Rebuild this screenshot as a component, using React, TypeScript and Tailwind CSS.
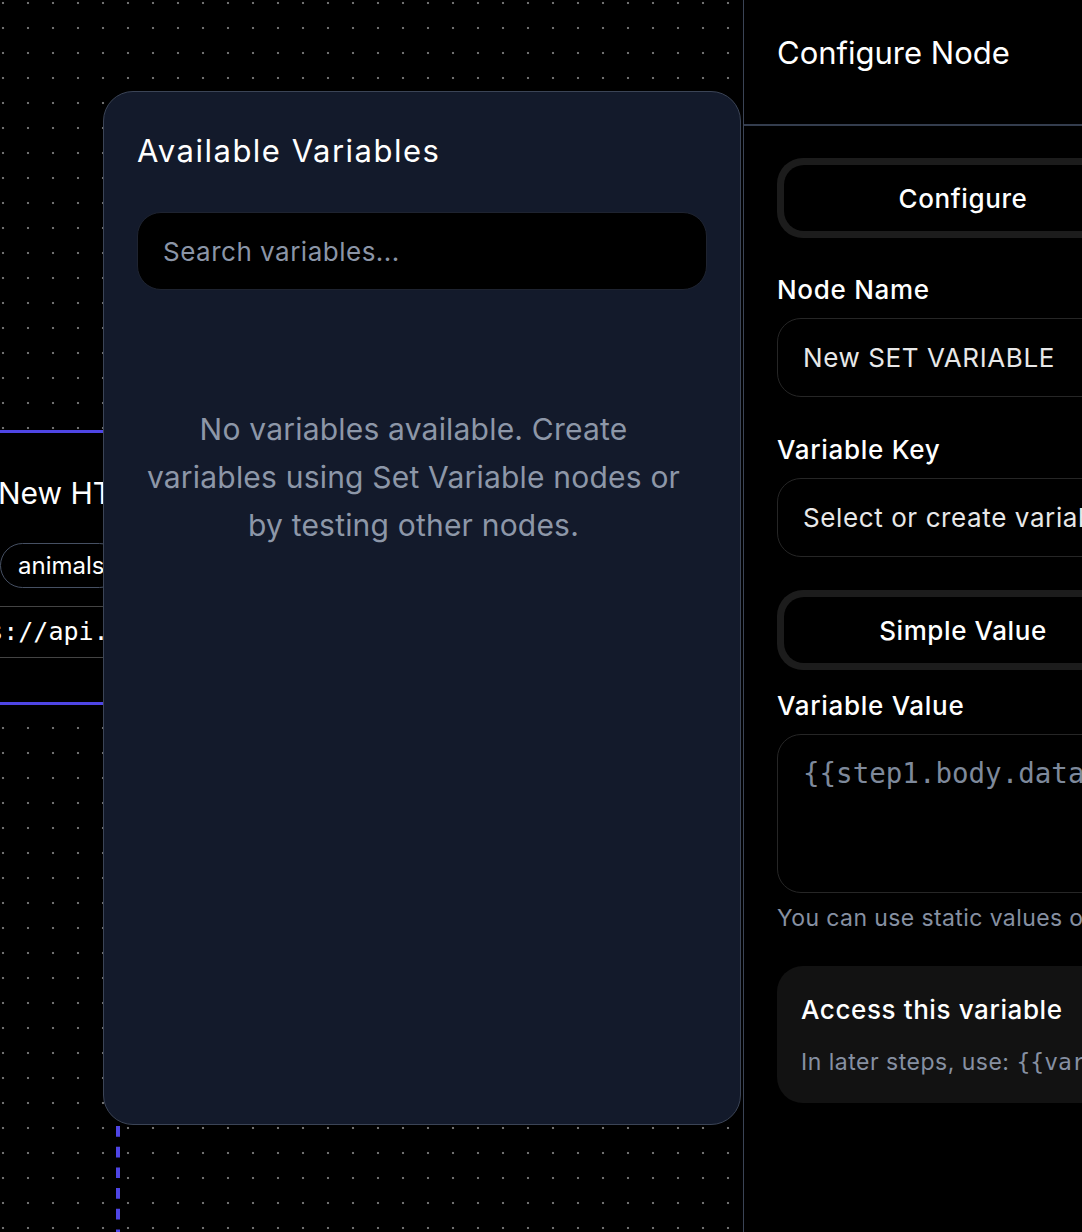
export default function App() {
  const mono = "font-['DejaVu_Sans_Mono',monospace]";
  return (
    <div className="w-[1082px] h-[1232px] overflow-hidden flex bg-black font-['Inter',sans-serif] text-white">
      {/* Canvas */}
      <div className="relative w-[743px] shrink-0 h-full overflow-hidden bg-black bg-[radial-gradient(circle_at_3px_3px,#707070_1px,transparent_1.6px)] bg-[length:25px_25px]">
        <svg className="absolute left-0 top-0" width="743" height="1232">
          <line x1="118" y1="712" x2="118" y2="1232" stroke="#4f46e5" strokeWidth="4" strokeDasharray="10.7 10" />
        </svg>

        {/* Node card */}
        <div className="absolute left-[-110px] top-[430px] w-[420px] h-[275px] rounded-[18px] border-[3px] border-[#4f46e5] bg-black px-6 pt-[42px]">
          <div className="flex items-center gap-6 h-[36px]">
            <div className="w-[57px] h-[36px] rounded-lg bg-[#1e1b4b] shrink-0" />
            <span className="text-[30px] leading-[36px] whitespace-nowrap">New HTTP REQUEST</span>
          </div>
          <div className="mt-[32px] flex">
            <div className="ml-[83px] flex h-[45px] items-center rounded-full border-[1.5px] border-[#465063] px-[17px] text-[24px] whitespace-nowrap">
              animals
            </div>
          </div>
          <div className={`mt-[18px] h-[52px] rounded-lg border-[1.5px] border-[#444444] flex items-center px-[10px] text-[25px] whitespace-nowrap overflow-hidden ${mono}`}>
            https://api.example.com/animals
          </div>
        </div>

        {/* Available Variables popover */}
        <div className="absolute left-[103px] top-[91px] w-[638px] h-[1034px] rounded-[30px] border-[1.5px] border-[#3b4456] bg-[#131a2b] px-[33px] pt-[41px]">
          <h2 className="text-[31px] leading-[36px] font-normal tracking-[1.5px] whitespace-nowrap">Available Variables</h2>
          <div className="mt-[43px] h-[78px] rounded-[24px] bg-black border border-[#1e2330] px-[25px] flex items-center text-[26px] tracking-[0.5px] text-[#8b95a7]">
            Search variables...
          </div>
          <div className="mt-[115px] pr-[17px] text-center text-[30px] leading-[48px] tracking-[0.2px] text-[#8d97a8]">
            <div className="whitespace-nowrap">No variables available. Create</div>
            <div className="whitespace-nowrap">variables using Set Variable nodes or</div>
            <div className="whitespace-nowrap">by testing other nodes.</div>
          </div>
        </div>
      </div>

      {/* Right panel */}
      <div className="w-[439px] shrink-0 h-full border-l border-[#3b4456] bg-black">
        <div className="h-[126px] border-b-2 border-[#343d4e] px-[33px] pt-[35px]">
          <h1 className="text-[31px] leading-[36px] font-normal whitespace-nowrap">Configure Node</h1>
        </div>
        <div className="px-[33px] pt-[32px] flex flex-col">
          <div className="h-[80px] rounded-[26px] bg-[#1c1c1c] p-[7px]">
            <div className="h-full rounded-[20px] bg-black flex items-center justify-center text-[26px] tracking-[0.6px] font-medium">Configure</div>
          </div>

          <label className="mt-[36px] text-[26px] leading-[32px] tracking-[0.7px] font-medium whitespace-nowrap">Node Name</label>
          <div className="mt-[12px] h-[79px] rounded-[24px] border border-[#262626] px-[25px] flex items-center text-[26px] tracking-[0.6px] text-[#e8e8e8] whitespace-nowrap overflow-hidden">
            New SET VARIABLE
          </div>

          <label className="mt-[37px] text-[26px] leading-[32px] tracking-[0.7px] font-medium whitespace-nowrap">Variable Key</label>
          <div className="mt-[12px] h-[79px] rounded-[24px] border border-[#262626] px-[25px] flex items-center text-[26px] tracking-[0.6px] text-[#e8e8e8] whitespace-nowrap overflow-hidden">
            Select or create variable
          </div>

          <div className="mt-[33px] h-[80px] rounded-[26px] bg-[#1c1c1c] p-[7px]">
            <div className="h-full rounded-[20px] bg-black flex items-center justify-center text-[26px] tracking-[0.6px] font-medium">Simple Value</div>
          </div>

          <label className="mt-[20px] text-[26px] leading-[32px] tracking-[0.7px] font-medium whitespace-nowrap">Variable Value</label>
          <div className={`mt-[12px] h-[159px] rounded-[24px] border border-[#262626] px-[25px] pt-[21px] text-[27.5px] leading-[34px] text-[#7e899b] whitespace-nowrap overflow-hidden ${mono}`}>
            {"{{step1.body.data.value}}"}
          </div>

          <p className="mt-[11px] text-[23px] leading-[28px] tracking-[0.4px] text-[#8690a2] whitespace-nowrap">
            You can use static values or variables
          </p>

          <div className="mt-[34px] h-[137px] rounded-[26px] bg-[#121212] px-[24px] pt-[28px]">
            <div className="text-[26px] leading-[32px] tracking-[0.6px] font-medium whitespace-nowrap">Access this variable</div>
            <div className="mt-[22px] text-[23px] leading-[28px] tracking-[0.5px] text-[#8690a2] whitespace-nowrap">
              In later steps, use: <span className={`${mono} tracking-normal`}>{"{{variables.name}}"}</span>
            </div>
          </div>
        </div>
      </div>
    </div>
  );
}
